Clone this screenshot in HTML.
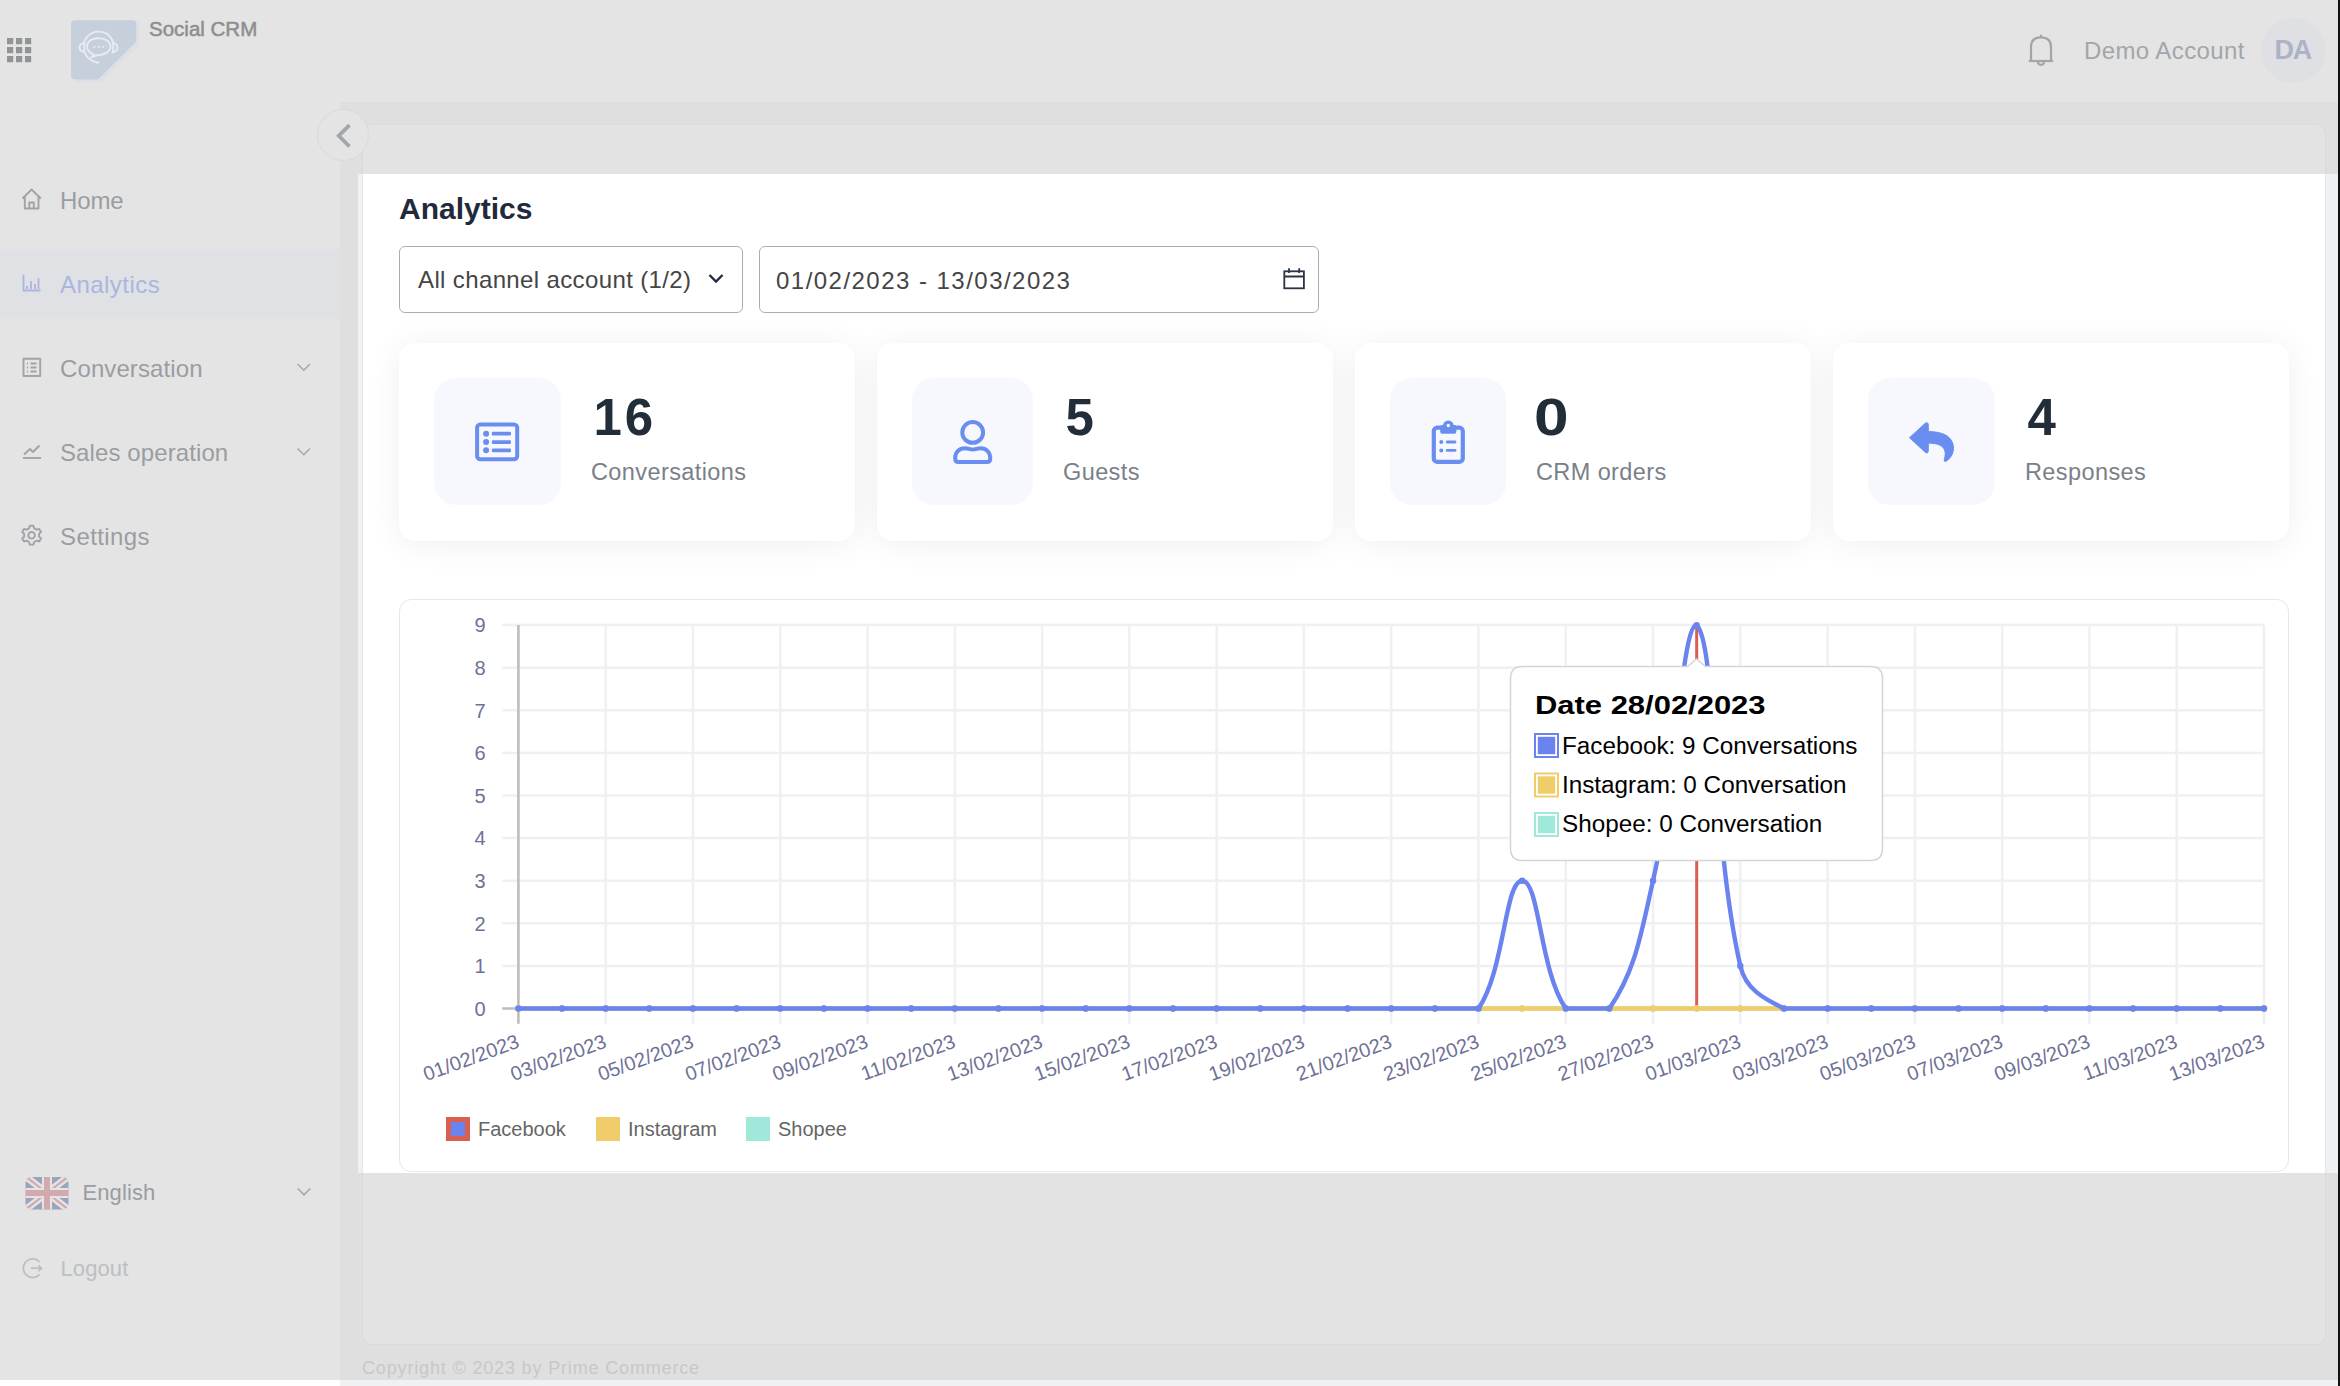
<!DOCTYPE html><html><head><meta charset="utf-8"><title>Analytics</title><style>
*{margin:0;padding:0;box-sizing:border-box}
html,body{width:2340px;height:1386px;overflow:hidden;background:#e4e4e4;font-family:"Liberation Sans",sans-serif}
.abs{position:absolute}
.t{position:absolute;white-space:nowrap;line-height:1}
</style></head><body>
<div class="abs" style="left:340px;top:102px;width:1998px;height:1278px;background:#dfdfdf"></div>
<div class="abs" style="left:0;top:1380px;width:340px;height:6px;background:#ffffff"></div>
<div class="abs" style="left:340px;top:1380px;width:1998px;height:6px;background:#f0f1f3"></div>
<div class="abs" style="left:362px;top:124px;width:1964px;height:1221px;background:#e3e3e3;border:1.5px solid #dadada;border-radius:10px"></div>
<div class="abs" style="left:2338px;top:0;width:2px;height:1386px;background:#111"></div>
<svg class="abs" style="left:0;top:0" width="60" height="80"><rect x="7" y="38" width="6.2" height="6.2" fill="#919496"/><rect x="16" y="38" width="6.2" height="6.2" fill="#919496"/><rect x="25" y="38" width="6.2" height="6.2" fill="#919496"/><rect x="7" y="47" width="6.2" height="6.2" fill="#919496"/><rect x="16" y="47" width="6.2" height="6.2" fill="#919496"/><rect x="25" y="47" width="6.2" height="6.2" fill="#919496"/><rect x="7" y="56" width="6.2" height="6.2" fill="#919496"/><rect x="16" y="56" width="6.2" height="6.2" fill="#919496"/><rect x="25" y="56" width="6.2" height="6.2" fill="#919496"/></svg>
<svg class="abs" style="left:60px;top:10px" width="100" height="90" viewBox="60 10 100 90">
<path d="M75 23.5 Q75 20.3 78 20.3 H136 Q139.2 20.3 139.2 23.5 V45 L101 82.4 H77 Q74 82.4 74 79 Z" fill="#dde0e6"/>
<path d="M75 20.3 H132.5 Q136.2 20.3 136.2 24 V41.8 L98 79.4 H75 Q71 79.4 71 75.5 V24.3 Q71 20.3 75 20.3 Z" fill="#c5d0dc"/>
<g fill="none" stroke="#e8ebef" stroke-width="1.9" stroke-linecap="round">
<path d="M84.3 41 Q89 31.6 98.6 31.6 Q108.5 31.6 112.5 40.5"/>
<path d="M84.5 43 Q83.5 47 84.5 52 Q87 60 97 62.5 H98.5"/>
<path d="M112.5 40 Q114 48 112.5 52.5"/>
<path d="M84 43 Q79.5 44 79.5 47.5 Q79.5 51 84 52"/>
<path d="M113 43 Q117.5 44 117.5 47.5 Q117.5 51.5 113 52"/>
<path d="M98.5 38.3 C106 38.3 110.5 42 110.5 46.5 C110.5 51.5 105 55 97 55.3 L91.8 57 L93.5 54.3 C89 52.5 87 49.5 87 46.5 C87 42 91 38.3 98.5 38.3 Z"/>
</g>
<g fill="#e8ebef"><rect x="93.5" y="46" width="1.8" height="1.8"/><rect x="97.8" y="46" width="1.8" height="1.8"/><rect x="102" y="46" width="1.8" height="1.8"/></g>
</svg>
<div class="t" style="left:149px;top:18.65px;font-size:20.5px;color:#8f8f8f;letter-spacing:0px;-webkit-text-stroke:0.55px #8f8f8f">Social CRM</div>
<svg class="abs" style="left:2020px;top:30px" width="44" height="44" viewBox="2020 30 44 44">
<g fill="none" stroke="#a2a6aa" stroke-width="2.2" stroke-linejoin="round">
<path d="M2031 60.8 V47 Q2031 37.3 2041 37.3 Q2051 37.3 2051 47 V60.8"/>
<path d="M2028.8 61 H2053.2"/>
<path d="M2038 61.5 Q2038 64.8 2041 64.8 Q2044 64.8 2044 61.5"/>
<path d="M2041 34.8 V37.3"/>
</g></svg>
<div class="t" style="left:2084px;top:38.88px;font-size:24px;color:#a2a6aa;letter-spacing:0.4px;">Demo Account</div>
<div class="abs" style="left:2261px;top:17.5px;width:65px;height:65px;border-radius:50%;background:#dfe0e3"></div>
<div class="t" style="left:2274.5px;top:37.14px;font-size:27px;color:#abb3c5;font-weight:bold;letter-spacing:-1.2px;">DA</div>
<div class="abs" style="left:317px;top:109px;width:52px;height:52px;border-radius:50%;background:#e4e4e4;border:1px solid #dadada"></div>
<svg class="abs" style="left:325px;top:117px" width="36" height="36" viewBox="325 117 36 36">
<path d="M349.5 125 L338.8 135.8 L349.5 146.5" fill="none" stroke="#a2a6a9" stroke-width="3.8"/></svg>
<div class="abs" style="left:0;top:248.5px;width:340px;height:70.5px;background:#e0e1e5"></div>
<div class="t" style="left:60px;top:188.98px;font-size:24px;color:#9a9da1;letter-spacing:-0.1px;">Home</div>
<div class="t" style="left:60px;top:272.98px;font-size:24px;color:#a9b7de;letter-spacing:0.45px;">Analytics</div>
<div class="t" style="left:60px;top:356.98px;font-size:24px;color:#9a9da1;letter-spacing:0.1px;">Conversation</div>
<div class="t" style="left:60px;top:440.98px;font-size:24px;color:#9a9da1;letter-spacing:0.1px;">Sales operation</div>
<div class="t" style="left:60px;top:524.98px;font-size:24px;color:#9a9da1;letter-spacing:0.4px;">Settings</div>
<svg class="abs" style="left:0;top:160px" width="340" height="420" viewBox="0 160 340 420">
<g fill="none" stroke="#a0a3a7" stroke-width="1.9" stroke-linejoin="round">
<path d="M22.5 198.5 L31.6 189.5 L40.8 198.5 M24.8 196.5 V208.5 H38.5 V196.5 M29.3 208.5 V202.5 H33.8 V208.5"/>
<path d="M23.5 358.8 H40.2 V376 H23.5 Z"/>
<path d="M27 363.5 H28 M27 367.5 H28 M27 371.5 H28 M30.5 363.5 H36.5 M30.5 367.5 H36.5 M30.5 371.5 H36.5"/>
<path d="M23 458 H41"/>
<path d="M24 454.5 L30 449 L33 452 L39.5 445.5"/>
<circle cx="31.6" cy="535.3" r="3.3"/>
<path d="M29.8 525.8 h3.6 l0.8 2.6 l2.4 1.3 l2.6-0.8 l1.8 3.1 l-2 1.9 v2.6 l2 1.9 l-1.8 3.1 l-2.6-0.8 l-2.4 1.3 l-0.8 2.6 h-3.6 l-0.8-2.6 l-2.4-1.3 l-2.6 0.8 l-1.8-3.1 l2-1.9 v-2.6 l-2-1.9 l1.8-3.1 l2.6 0.8 l2.4-1.3 z"/>
</g>
<g fill="none" stroke="#a9b7de" stroke-width="1.8">
<path d="M23.5 274.5 V290.5 H40.5"/>
<path d="M27 286 V289 M31 281 V289 M35 284 V289 M38.5 278 V289"/>
</g>
<g fill="none" stroke="#a6a9ad" stroke-width="1.6">
<path d="M297.5 364 L303.8 370.2 L310 364"/>
<path d="M297.5 448.5 L303.8 454.7 L310 448.5"/>
</g>
</svg>
<svg class="abs" style="left:20px;top:1170px" width="60" height="50" viewBox="20 1170 60 50">
<defs><clipPath id="fl"><rect x="25.5" y="1177" width="43" height="32.5" rx="6"/></clipPath></defs>
<g clip-path="url(#fl)">
<rect x="25" y="1176" width="44" height="34" fill="#9ba3bd"/>
<path d="M25 1176 L69 1210 M69 1176 L25 1210" stroke="#e4e4e4" stroke-width="7"/>
<path d="M25 1176 L47 1193 M69 1176 L47 1193 M25 1210 L47 1193 M69 1210 L47 1193" stroke="#d2a9ae" stroke-width="2.2"/>
<path d="M47 1176 V1210 M25 1193 H69" stroke="#e4e4e4" stroke-width="10"/>
<path d="M47 1176 V1210 M25 1193 H69" stroke="#d2a9ae" stroke-width="6"/>
</g></svg>
<div class="t" style="left:82.5px;top:1181.68px;font-size:22px;color:#9a9da1;letter-spacing:0.1px;">English</div>
<svg class="abs" style="left:290px;top:1180px" width="30" height="25" viewBox="290 1180 30 25">
<path d="M297.8 1188.5 L304 1194.8 L310.3 1188.5" fill="none" stroke="#a6a9ad" stroke-width="1.7"/></svg>
<svg class="abs" style="left:15px;top:1250px" width="35" height="35" viewBox="15 1250 35 35">
<g fill="none" stroke="#bcbfc3" stroke-width="1.8">
<path d="M39.5 1262 A9.3 9.3 0 1 0 39.5 1274.5"/>
<path d="M31 1268.2 H41.5 M38.5 1265.3 L41.5 1268.2 L38.5 1271.1"/>
</g></svg>
<div class="t" style="left:60.5px;top:1257.88px;font-size:22px;color:#bcbfc3;letter-spacing:0.1px;">Logout</div>
<div class="t" style="left:362px;top:1358.96px;font-size:18px;color:#c6c8cb;letter-spacing:0.84px;">Copyright &copy; 2023 by Prime Commerce</div>
<div class="abs" style="left:358px;top:174px;width:1980px;height:999px;background:#f0f1f3;overflow:hidden">
<div class="abs" style="left:4px;top:-50px;width:1964px;height:1221px;background:#fff;border:1.5px solid #e6e8eb;border-radius:10px"></div>
</div>
<div class="t" style="left:399px;top:194.30px;font-size:30px;color:#1f2a3a;font-weight:bold;letter-spacing:0px;">Analytics</div>
<div class="abs" style="left:399px;top:245.5px;width:344px;height:67.5px;border:1.6px solid #a9adb3;border-radius:6px;background:#fff"></div>
<div class="t" style="left:418px;top:268.18px;font-size:24px;color:#454545;letter-spacing:0.37px;">All channel account (1/2)</div>
<svg class="abs" style="left:700px;top:265px" width="30" height="25" viewBox="700 265 30 25">
<path d="M709.5 275 L716 281.6 L722.5 275" fill="none" stroke="#1f2a3a" stroke-width="2.3"/></svg>
<div class="abs" style="left:758.5px;top:245.5px;width:560px;height:67.5px;border:1.6px solid #a9adb3;border-radius:6px;background:#fff"></div>
<div class="t" style="left:776px;top:268.68px;font-size:24px;color:#454545;letter-spacing:1.47px;">01/02/2023 - 13/03/2023</div>
<svg class="abs" style="left:1278px;top:262px" width="32" height="32" viewBox="1278 262 32 32">
<g fill="none" stroke="#2a3444" stroke-width="1.8">
<rect x="1284.3" y="271.3" width="19.6" height="17"/>
<path d="M1284.3 276.5 H1303.9 M1289 268.3 V273 M1299.2 268.3 V273"/>
</g></svg>
<div class="abs" style="left:399px;top:343px;width:456px;height:198px;border-radius:16px;background:#fff;box-shadow:0 3px 34px rgba(0,0,0,0.065)"></div>
<div class="abs" style="left:434px;top:378px;width:127px;height:127px;border-radius:22px;background:#f6f8fe"></div>
<div class="t" style="left:593.5px;top:392.13px;font-size:51px;color:#222d3a;font-weight:bold;letter-spacing:3px;">16</div>
<div class="t" style="left:591px;top:461.31px;font-size:23.5px;color:#7a8088;letter-spacing:0.4px;">Conversations</div>
<div class="abs" style="left:877px;top:343px;width:456px;height:198px;border-radius:16px;background:#fff;box-shadow:0 3px 34px rgba(0,0,0,0.065)"></div>
<div class="abs" style="left:912px;top:378px;width:121px;height:127px;border-radius:22px;background:#f6f8fe"></div>
<div class="t" style="left:1065.5px;top:392.13px;font-size:51px;color:#222d3a;font-weight:bold;letter-spacing:3px;">5</div>
<div class="t" style="left:1063px;top:461.31px;font-size:23.5px;color:#7a8088;letter-spacing:0.4px;">Guests</div>
<div class="abs" style="left:1355px;top:343px;width:456px;height:198px;border-radius:16px;background:#fff;box-shadow:0 3px 34px rgba(0,0,0,0.065)"></div>
<div class="abs" style="left:1390px;top:378px;width:116px;height:127px;border-radius:22px;background:#f6f8fe"></div>
<div class="t" style="left:1534.0px;top:392.13px;font-size:51px;color:#222d3a;font-weight:bold;letter-spacing:3px;transform:scaleX(1.22);transform-origin:0 0">0</div>
<div class="t" style="left:1536px;top:461.31px;font-size:23.5px;color:#7a8088;letter-spacing:0.4px;">CRM orders</div>
<div class="abs" style="left:1833px;top:343px;width:456px;height:198px;border-radius:16px;background:#fff;box-shadow:0 3px 34px rgba(0,0,0,0.065)"></div>
<div class="abs" style="left:1868px;top:378px;width:127px;height:127px;border-radius:22px;background:#f6f8fe"></div>
<div class="t" style="left:2027.5px;top:392.13px;font-size:51px;color:#222d3a;font-weight:bold;letter-spacing:3px;">4</div>
<div class="t" style="left:2025px;top:461.31px;font-size:23.5px;color:#7a8088;letter-spacing:0.4px;">Responses</div>
<svg class="abs" style="left:0;top:0;overflow:visible" width="2340" height="600" viewBox="0 0 2340 600">
<rect x="477.1" y="424.4" width="40.1" height="34.8" rx="3.2" stroke="#6a8ef0" fill="none" stroke-width="4"/>
<g fill="#6a8ef0">
<circle cx="486.1" cy="433.7" r="3"/><circle cx="486.1" cy="442.1" r="3"/><circle cx="486.1" cy="450.3" r="3"/>
<rect x="491.8" y="431.8" width="19.2" height="3.8" rx="1.3"/><rect x="491.8" y="440.2" width="19.2" height="3.8" rx="1.3"/><rect x="491.8" y="448.4" width="19.2" height="3.8" rx="1.3"/>
</g>
<g stroke="#6a8ef0" fill="none" stroke-width="4">
<circle cx="972.7" cy="432.4" r="10.4"/>
<path d="M958.5 462 H987 Q990.2 462 990.2 458.8 V458 C990.2 452 986 448.2 980.5 448.2 C977.4 448.2 975.4 449.6 972.7 449.6 C970 449.6 968 448.2 965 448.2 C959.4 448.2 955.2 452 955.2 458 V458.8 Q955.2 462 958.5 462 Z"/>
</g>
<rect x="1433.8" y="427.6" width="29" height="34.3" rx="3.5" stroke="#6a8ef0" fill="none" stroke-width="4.2"/>
<g fill="#6a8ef0">
<rect x="1440.2" y="425" width="16.2" height="8.7" rx="2"/>
<circle cx="1448.3" cy="425.8" r="5.4"/>
<circle cx="1441.3" cy="442" r="2"/><circle cx="1441.3" cy="450.4" r="2"/>
<rect x="1445.8" y="440.6" width="10.6" height="2.8" rx="1.4"/><rect x="1445.8" y="449" width="10.6" height="2.8" rx="1.4"/>
</g>
<circle cx="1448.3" cy="425.5" r="1.7" fill="#f6f8fe"/>
<path d="M1909.5 437.7 L1925 423.5 Q1928 421.2 1928.3 425 V431.6 C1942 431.6 1953.5 436 1953.5 448.5 C1953.5 454 1950 458.5 1946.5 461 Q1943.5 462.2 1944.3 459.5 C1946.5 452 1946 443.3 1928.3 443.1 V450.5 Q1928 454.5 1925 452 Z" fill="#6a8ef0" stroke="#6a8ef0" stroke-width="1" stroke-linejoin="round"/>
</svg>
<div class="abs" style="left:399px;top:599px;width:1890px;height:573px;border:1.5px solid #e5e7ea;border-radius:12px;background:#fff"></div>
<svg class="abs" style="left:0;top:0" width="2340" height="1386" viewBox="0 0 2340 1386">
<style>.yl{font:20px "Liberation Sans",sans-serif;fill:#6e7196}.xl{font:20px "Liberation Sans",sans-serif;fill:#6e7196}</style>
<line x1="605.68" y1="625.10" x2="605.68" y2="1023.8" stroke="#eef0f3" stroke-width="2.5"/>
<line x1="692.96" y1="625.10" x2="692.96" y2="1023.8" stroke="#eef0f3" stroke-width="2.5"/>
<line x1="780.24" y1="625.10" x2="780.24" y2="1023.8" stroke="#eef0f3" stroke-width="2.5"/>
<line x1="867.52" y1="625.10" x2="867.52" y2="1023.8" stroke="#eef0f3" stroke-width="2.5"/>
<line x1="954.80" y1="625.10" x2="954.80" y2="1023.8" stroke="#eef0f3" stroke-width="2.5"/>
<line x1="1042.08" y1="625.10" x2="1042.08" y2="1023.8" stroke="#eef0f3" stroke-width="2.5"/>
<line x1="1129.36" y1="625.10" x2="1129.36" y2="1023.8" stroke="#eef0f3" stroke-width="2.5"/>
<line x1="1216.64" y1="625.10" x2="1216.64" y2="1023.8" stroke="#eef0f3" stroke-width="2.5"/>
<line x1="1303.92" y1="625.10" x2="1303.92" y2="1023.8" stroke="#eef0f3" stroke-width="2.5"/>
<line x1="1391.20" y1="625.10" x2="1391.20" y2="1023.8" stroke="#eef0f3" stroke-width="2.5"/>
<line x1="1478.48" y1="625.10" x2="1478.48" y2="1023.8" stroke="#eef0f3" stroke-width="2.5"/>
<line x1="1565.76" y1="625.10" x2="1565.76" y2="1023.8" stroke="#eef0f3" stroke-width="2.5"/>
<line x1="1653.04" y1="625.10" x2="1653.04" y2="1023.8" stroke="#eef0f3" stroke-width="2.5"/>
<line x1="1740.32" y1="625.10" x2="1740.32" y2="1023.8" stroke="#eef0f3" stroke-width="2.5"/>
<line x1="1827.60" y1="625.10" x2="1827.60" y2="1023.8" stroke="#eef0f3" stroke-width="2.5"/>
<line x1="1914.88" y1="625.10" x2="1914.88" y2="1023.8" stroke="#eef0f3" stroke-width="2.5"/>
<line x1="2002.16" y1="625.10" x2="2002.16" y2="1023.8" stroke="#eef0f3" stroke-width="2.5"/>
<line x1="2089.44" y1="625.10" x2="2089.44" y2="1023.8" stroke="#eef0f3" stroke-width="2.5"/>
<line x1="2176.72" y1="625.10" x2="2176.72" y2="1023.8" stroke="#eef0f3" stroke-width="2.5"/>
<line x1="2264.00" y1="625.10" x2="2264.00" y2="1023.8" stroke="#eef0f3" stroke-width="2.5"/>
<line x1="502.2" y1="965.90" x2="2264.00" y2="965.90" stroke="#eef0f3" stroke-width="2.5"/>
<line x1="502.2" y1="923.30" x2="2264.00" y2="923.30" stroke="#eef0f3" stroke-width="2.5"/>
<line x1="502.2" y1="880.70" x2="2264.00" y2="880.70" stroke="#eef0f3" stroke-width="2.5"/>
<line x1="502.2" y1="838.10" x2="2264.00" y2="838.10" stroke="#eef0f3" stroke-width="2.5"/>
<line x1="502.2" y1="795.50" x2="2264.00" y2="795.50" stroke="#eef0f3" stroke-width="2.5"/>
<line x1="502.2" y1="752.90" x2="2264.00" y2="752.90" stroke="#eef0f3" stroke-width="2.5"/>
<line x1="502.2" y1="710.30" x2="2264.00" y2="710.30" stroke="#eef0f3" stroke-width="2.5"/>
<line x1="502.2" y1="667.70" x2="2264.00" y2="667.70" stroke="#eef0f3" stroke-width="2.5"/>
<line x1="502.2" y1="625.10" x2="2264.00" y2="625.10" stroke="#eef0f3" stroke-width="2.5"/>
<line x1="502.2" y1="1008.50" x2="2264.00" y2="1008.50" stroke="#bdbdbd" stroke-width="2.6"/>
<line x1="518.40" y1="625.10" x2="518.40" y2="1023.8" stroke="#bdbdbd" stroke-width="2.6"/>
<text x="485.5" y="1015.70" text-anchor="end" class="yl">0</text>
<text x="485.5" y="973.10" text-anchor="end" class="yl">1</text>
<text x="485.5" y="930.50" text-anchor="end" class="yl">2</text>
<text x="485.5" y="887.90" text-anchor="end" class="yl">3</text>
<text x="485.5" y="845.30" text-anchor="end" class="yl">4</text>
<text x="485.5" y="802.70" text-anchor="end" class="yl">5</text>
<text x="485.5" y="760.10" text-anchor="end" class="yl">6</text>
<text x="485.5" y="717.50" text-anchor="end" class="yl">7</text>
<text x="485.5" y="674.90" text-anchor="end" class="yl">8</text>
<text x="485.5" y="632.30" text-anchor="end" class="yl">9</text>
<text transform="translate(520.40 1047) rotate(-20)" text-anchor="end" class="xl">01/02/2023</text>
<text transform="translate(607.68 1047) rotate(-20)" text-anchor="end" class="xl">03/02/2023</text>
<text transform="translate(694.96 1047) rotate(-20)" text-anchor="end" class="xl">05/02/2023</text>
<text transform="translate(782.24 1047) rotate(-20)" text-anchor="end" class="xl">07/02/2023</text>
<text transform="translate(869.52 1047) rotate(-20)" text-anchor="end" class="xl">09/02/2023</text>
<text transform="translate(956.80 1047) rotate(-20)" text-anchor="end" class="xl">11/02/2023</text>
<text transform="translate(1044.08 1047) rotate(-20)" text-anchor="end" class="xl">13/02/2023</text>
<text transform="translate(1131.36 1047) rotate(-20)" text-anchor="end" class="xl">15/02/2023</text>
<text transform="translate(1218.64 1047) rotate(-20)" text-anchor="end" class="xl">17/02/2023</text>
<text transform="translate(1305.92 1047) rotate(-20)" text-anchor="end" class="xl">19/02/2023</text>
<text transform="translate(1393.20 1047) rotate(-20)" text-anchor="end" class="xl">21/02/2023</text>
<text transform="translate(1480.48 1047) rotate(-20)" text-anchor="end" class="xl">23/02/2023</text>
<text transform="translate(1567.76 1047) rotate(-20)" text-anchor="end" class="xl">25/02/2023</text>
<text transform="translate(1655.04 1047) rotate(-20)" text-anchor="end" class="xl">27/02/2023</text>
<text transform="translate(1742.32 1047) rotate(-20)" text-anchor="end" class="xl">01/03/2023</text>
<text transform="translate(1829.60 1047) rotate(-20)" text-anchor="end" class="xl">03/03/2023</text>
<text transform="translate(1916.88 1047) rotate(-20)" text-anchor="end" class="xl">05/03/2023</text>
<text transform="translate(2004.16 1047) rotate(-20)" text-anchor="end" class="xl">07/03/2023</text>
<text transform="translate(2091.44 1047) rotate(-20)" text-anchor="end" class="xl">09/03/2023</text>
<text transform="translate(2178.72 1047) rotate(-20)" text-anchor="end" class="xl">11/03/2023</text>
<text transform="translate(2266.00 1047) rotate(-20)" text-anchor="end" class="xl">13/03/2023</text>
<line x1="1696.68" y1="625.10" x2="1696.68" y2="1008.50" stroke="#d95f50" stroke-width="3"/>
<path d="M518.40 1008.50C535.86 1008.50 544.58 1008.50 562.04 1008.50C579.50 1008.50 588.22 1008.50 605.68 1008.50C623.14 1008.50 631.86 1008.50 649.32 1008.50C666.78 1008.50 675.50 1008.50 692.96 1008.50C710.42 1008.50 719.14 1008.50 736.60 1008.50C754.06 1008.50 762.78 1008.50 780.24 1008.50C797.70 1008.50 806.42 1008.50 823.88 1008.50C841.34 1008.50 850.06 1008.50 867.52 1008.50C884.98 1008.50 893.70 1008.50 911.16 1008.50C928.62 1008.50 937.34 1008.50 954.80 1008.50C972.26 1008.50 980.98 1008.50 998.44 1008.50C1015.90 1008.50 1024.62 1008.50 1042.08 1008.50C1059.54 1008.50 1068.26 1008.50 1085.72 1008.50C1103.18 1008.50 1111.90 1008.50 1129.36 1008.50C1146.82 1008.50 1155.54 1008.50 1173.00 1008.50C1190.46 1008.50 1199.18 1008.50 1216.64 1008.50C1234.10 1008.50 1242.82 1008.50 1260.28 1008.50C1277.74 1008.50 1286.46 1008.50 1303.92 1008.50C1321.38 1008.50 1330.10 1008.50 1347.56 1008.50C1365.02 1008.50 1373.74 1008.50 1391.20 1008.50C1408.66 1008.50 1417.38 1008.50 1434.84 1008.50C1452.30 1008.50 1461.02 1008.50 1478.48 1008.50C1495.94 1008.50 1504.66 1008.50 1522.12 1008.50C1539.58 1008.50 1548.30 1008.50 1565.76 1008.50C1583.22 1008.50 1591.94 1008.50 1609.40 1008.50C1626.86 1008.50 1635.58 1008.50 1653.04 1008.50C1670.50 1008.50 1679.22 1008.50 1696.68 1008.50C1714.14 1008.50 1722.86 1008.50 1740.32 1008.50C1757.78 1008.50 1766.50 1008.50 1783.96 1008.50C1801.42 1008.50 1810.14 1008.50 1827.60 1008.50C1845.06 1008.50 1853.78 1008.50 1871.24 1008.50C1888.70 1008.50 1897.42 1008.50 1914.88 1008.50C1932.34 1008.50 1941.06 1008.50 1958.52 1008.50C1975.98 1008.50 1984.70 1008.50 2002.16 1008.50C2019.62 1008.50 2028.34 1008.50 2045.80 1008.50C2063.26 1008.50 2071.98 1008.50 2089.44 1008.50C2106.90 1008.50 2115.62 1008.50 2133.08 1008.50C2150.54 1008.50 2159.26 1008.50 2176.72 1008.50C2194.18 1008.50 2202.90 1008.50 2220.36 1008.50C2237.82 1008.50 2246.54 1008.50 2264.00 1008.50" fill="none" stroke="#a0e9da" stroke-width="4.4" stroke-linejoin="round"/>
<circle cx="518.40" cy="1008.50" r="3.2" fill="#a0e9da"/>
<circle cx="562.04" cy="1008.50" r="3.2" fill="#a0e9da"/>
<circle cx="605.68" cy="1008.50" r="3.2" fill="#a0e9da"/>
<circle cx="649.32" cy="1008.50" r="3.2" fill="#a0e9da"/>
<circle cx="692.96" cy="1008.50" r="3.2" fill="#a0e9da"/>
<circle cx="736.60" cy="1008.50" r="3.2" fill="#a0e9da"/>
<circle cx="780.24" cy="1008.50" r="3.2" fill="#a0e9da"/>
<circle cx="823.88" cy="1008.50" r="3.2" fill="#a0e9da"/>
<circle cx="867.52" cy="1008.50" r="3.2" fill="#a0e9da"/>
<circle cx="911.16" cy="1008.50" r="3.2" fill="#a0e9da"/>
<circle cx="954.80" cy="1008.50" r="3.2" fill="#a0e9da"/>
<circle cx="998.44" cy="1008.50" r="3.2" fill="#a0e9da"/>
<circle cx="1042.08" cy="1008.50" r="3.2" fill="#a0e9da"/>
<circle cx="1085.72" cy="1008.50" r="3.2" fill="#a0e9da"/>
<circle cx="1129.36" cy="1008.50" r="3.2" fill="#a0e9da"/>
<circle cx="1173.00" cy="1008.50" r="3.2" fill="#a0e9da"/>
<circle cx="1216.64" cy="1008.50" r="3.2" fill="#a0e9da"/>
<circle cx="1260.28" cy="1008.50" r="3.2" fill="#a0e9da"/>
<circle cx="1303.92" cy="1008.50" r="3.2" fill="#a0e9da"/>
<circle cx="1347.56" cy="1008.50" r="3.2" fill="#a0e9da"/>
<circle cx="1391.20" cy="1008.50" r="3.2" fill="#a0e9da"/>
<circle cx="1434.84" cy="1008.50" r="3.2" fill="#a0e9da"/>
<circle cx="1478.48" cy="1008.50" r="3.2" fill="#a0e9da"/>
<circle cx="1522.12" cy="1008.50" r="3.2" fill="#a0e9da"/>
<circle cx="1565.76" cy="1008.50" r="3.2" fill="#a0e9da"/>
<circle cx="1609.40" cy="1008.50" r="3.2" fill="#a0e9da"/>
<circle cx="1653.04" cy="1008.50" r="3.2" fill="#a0e9da"/>
<circle cx="1696.68" cy="1008.50" r="3.2" fill="#a0e9da"/>
<circle cx="1740.32" cy="1008.50" r="3.2" fill="#a0e9da"/>
<circle cx="1783.96" cy="1008.50" r="3.2" fill="#a0e9da"/>
<circle cx="1827.60" cy="1008.50" r="3.2" fill="#a0e9da"/>
<circle cx="1871.24" cy="1008.50" r="3.2" fill="#a0e9da"/>
<circle cx="1914.88" cy="1008.50" r="3.2" fill="#a0e9da"/>
<circle cx="1958.52" cy="1008.50" r="3.2" fill="#a0e9da"/>
<circle cx="2002.16" cy="1008.50" r="3.2" fill="#a0e9da"/>
<circle cx="2045.80" cy="1008.50" r="3.2" fill="#a0e9da"/>
<circle cx="2089.44" cy="1008.50" r="3.2" fill="#a0e9da"/>
<circle cx="2133.08" cy="1008.50" r="3.2" fill="#a0e9da"/>
<circle cx="2176.72" cy="1008.50" r="3.2" fill="#a0e9da"/>
<circle cx="2220.36" cy="1008.50" r="3.2" fill="#a0e9da"/>
<circle cx="2264.00" cy="1008.50" r="3.2" fill="#a0e9da"/>
<path d="M518.40 1008.50C535.86 1008.50 544.58 1008.50 562.04 1008.50C579.50 1008.50 588.22 1008.50 605.68 1008.50C623.14 1008.50 631.86 1008.50 649.32 1008.50C666.78 1008.50 675.50 1008.50 692.96 1008.50C710.42 1008.50 719.14 1008.50 736.60 1008.50C754.06 1008.50 762.78 1008.50 780.24 1008.50C797.70 1008.50 806.42 1008.50 823.88 1008.50C841.34 1008.50 850.06 1008.50 867.52 1008.50C884.98 1008.50 893.70 1008.50 911.16 1008.50C928.62 1008.50 937.34 1008.50 954.80 1008.50C972.26 1008.50 980.98 1008.50 998.44 1008.50C1015.90 1008.50 1024.62 1008.50 1042.08 1008.50C1059.54 1008.50 1068.26 1008.50 1085.72 1008.50C1103.18 1008.50 1111.90 1008.50 1129.36 1008.50C1146.82 1008.50 1155.54 1008.50 1173.00 1008.50C1190.46 1008.50 1199.18 1008.50 1216.64 1008.50C1234.10 1008.50 1242.82 1008.50 1260.28 1008.50C1277.74 1008.50 1286.46 1008.50 1303.92 1008.50C1321.38 1008.50 1330.10 1008.50 1347.56 1008.50C1365.02 1008.50 1373.74 1008.50 1391.20 1008.50C1408.66 1008.50 1417.38 1008.50 1434.84 1008.50C1452.30 1008.50 1461.02 1008.50 1478.48 1008.50C1495.94 1008.50 1504.66 1008.50 1522.12 1008.50C1539.58 1008.50 1548.30 1008.50 1565.76 1008.50C1583.22 1008.50 1591.94 1008.50 1609.40 1008.50C1626.86 1008.50 1635.58 1008.50 1653.04 1008.50C1670.50 1008.50 1679.22 1008.50 1696.68 1008.50C1714.14 1008.50 1722.86 1008.50 1740.32 1008.50C1757.78 1008.50 1766.50 1008.50 1783.96 1008.50C1801.42 1008.50 1810.14 1008.50 1827.60 1008.50C1845.06 1008.50 1853.78 1008.50 1871.24 1008.50C1888.70 1008.50 1897.42 1008.50 1914.88 1008.50C1932.34 1008.50 1941.06 1008.50 1958.52 1008.50C1975.98 1008.50 1984.70 1008.50 2002.16 1008.50C2019.62 1008.50 2028.34 1008.50 2045.80 1008.50C2063.26 1008.50 2071.98 1008.50 2089.44 1008.50C2106.90 1008.50 2115.62 1008.50 2133.08 1008.50C2150.54 1008.50 2159.26 1008.50 2176.72 1008.50C2194.18 1008.50 2202.90 1008.50 2220.36 1008.50C2237.82 1008.50 2246.54 1008.50 2264.00 1008.50" fill="none" stroke="#f0cd6a" stroke-width="4.4" stroke-linejoin="round"/>
<circle cx="518.40" cy="1008.50" r="3.2" fill="#f0cd6a"/>
<circle cx="562.04" cy="1008.50" r="3.2" fill="#f0cd6a"/>
<circle cx="605.68" cy="1008.50" r="3.2" fill="#f0cd6a"/>
<circle cx="649.32" cy="1008.50" r="3.2" fill="#f0cd6a"/>
<circle cx="692.96" cy="1008.50" r="3.2" fill="#f0cd6a"/>
<circle cx="736.60" cy="1008.50" r="3.2" fill="#f0cd6a"/>
<circle cx="780.24" cy="1008.50" r="3.2" fill="#f0cd6a"/>
<circle cx="823.88" cy="1008.50" r="3.2" fill="#f0cd6a"/>
<circle cx="867.52" cy="1008.50" r="3.2" fill="#f0cd6a"/>
<circle cx="911.16" cy="1008.50" r="3.2" fill="#f0cd6a"/>
<circle cx="954.80" cy="1008.50" r="3.2" fill="#f0cd6a"/>
<circle cx="998.44" cy="1008.50" r="3.2" fill="#f0cd6a"/>
<circle cx="1042.08" cy="1008.50" r="3.2" fill="#f0cd6a"/>
<circle cx="1085.72" cy="1008.50" r="3.2" fill="#f0cd6a"/>
<circle cx="1129.36" cy="1008.50" r="3.2" fill="#f0cd6a"/>
<circle cx="1173.00" cy="1008.50" r="3.2" fill="#f0cd6a"/>
<circle cx="1216.64" cy="1008.50" r="3.2" fill="#f0cd6a"/>
<circle cx="1260.28" cy="1008.50" r="3.2" fill="#f0cd6a"/>
<circle cx="1303.92" cy="1008.50" r="3.2" fill="#f0cd6a"/>
<circle cx="1347.56" cy="1008.50" r="3.2" fill="#f0cd6a"/>
<circle cx="1391.20" cy="1008.50" r="3.2" fill="#f0cd6a"/>
<circle cx="1434.84" cy="1008.50" r="3.2" fill="#f0cd6a"/>
<circle cx="1478.48" cy="1008.50" r="3.2" fill="#f0cd6a"/>
<circle cx="1522.12" cy="1008.50" r="3.2" fill="#f0cd6a"/>
<circle cx="1565.76" cy="1008.50" r="3.2" fill="#f0cd6a"/>
<circle cx="1609.40" cy="1008.50" r="3.2" fill="#f0cd6a"/>
<circle cx="1653.04" cy="1008.50" r="3.2" fill="#f0cd6a"/>
<circle cx="1696.68" cy="1008.50" r="3.2" fill="#f0cd6a"/>
<circle cx="1740.32" cy="1008.50" r="3.2" fill="#f0cd6a"/>
<circle cx="1783.96" cy="1008.50" r="3.2" fill="#f0cd6a"/>
<circle cx="1827.60" cy="1008.50" r="3.2" fill="#f0cd6a"/>
<circle cx="1871.24" cy="1008.50" r="3.2" fill="#f0cd6a"/>
<circle cx="1914.88" cy="1008.50" r="3.2" fill="#f0cd6a"/>
<circle cx="1958.52" cy="1008.50" r="3.2" fill="#f0cd6a"/>
<circle cx="2002.16" cy="1008.50" r="3.2" fill="#f0cd6a"/>
<circle cx="2045.80" cy="1008.50" r="3.2" fill="#f0cd6a"/>
<circle cx="2089.44" cy="1008.50" r="3.2" fill="#f0cd6a"/>
<circle cx="2133.08" cy="1008.50" r="3.2" fill="#f0cd6a"/>
<circle cx="2176.72" cy="1008.50" r="3.2" fill="#f0cd6a"/>
<circle cx="2220.36" cy="1008.50" r="3.2" fill="#f0cd6a"/>
<circle cx="2264.00" cy="1008.50" r="3.2" fill="#f0cd6a"/>
<path d="M518.40 1008.50C535.86 1008.50 544.58 1008.50 562.04 1008.50C579.50 1008.50 588.22 1008.50 605.68 1008.50C623.14 1008.50 631.86 1008.50 649.32 1008.50C666.78 1008.50 675.50 1008.50 692.96 1008.50C710.42 1008.50 719.14 1008.50 736.60 1008.50C754.06 1008.50 762.78 1008.50 780.24 1008.50C797.70 1008.50 806.42 1008.50 823.88 1008.50C841.34 1008.50 850.06 1008.50 867.52 1008.50C884.98 1008.50 893.70 1008.50 911.16 1008.50C928.62 1008.50 937.34 1008.50 954.80 1008.50C972.26 1008.50 980.98 1008.50 998.44 1008.50C1015.90 1008.50 1024.62 1008.50 1042.08 1008.50C1059.54 1008.50 1068.26 1008.50 1085.72 1008.50C1103.18 1008.50 1111.90 1008.50 1129.36 1008.50C1146.82 1008.50 1155.54 1008.50 1173.00 1008.50C1190.46 1008.50 1199.18 1008.50 1216.64 1008.50C1234.10 1008.50 1242.82 1008.50 1260.28 1008.50C1277.74 1008.50 1286.46 1008.50 1303.92 1008.50C1321.38 1008.50 1330.10 1008.50 1347.56 1008.50C1365.02 1008.50 1373.74 1008.50 1391.20 1008.50C1408.66 1008.50 1417.38 1008.50 1434.84 1008.50C1452.30 1008.50 1469.95 1008.50 1478.48 1008.50C1504.87 969.86 1504.66 880.70 1522.12 880.70C1539.58 880.70 1539.37 969.86 1565.76 1008.50C1574.29 1008.50 1600.87 1008.50 1609.40 1008.50C1635.79 969.86 1641.08 933.22 1653.04 880.70C1676.00 779.86 1681.66 625.10 1696.68 625.10C1716.58 644.52 1710.67 835.66 1740.32 965.90C1745.58 989.02 1763.61 998.57 1783.96 1008.50C1798.52 1008.50 1810.14 1008.50 1827.60 1008.50C1845.06 1008.50 1853.78 1008.50 1871.24 1008.50C1888.70 1008.50 1897.42 1008.50 1914.88 1008.50C1932.34 1008.50 1941.06 1008.50 1958.52 1008.50C1975.98 1008.50 1984.70 1008.50 2002.16 1008.50C2019.62 1008.50 2028.34 1008.50 2045.80 1008.50C2063.26 1008.50 2071.98 1008.50 2089.44 1008.50C2106.90 1008.50 2115.62 1008.50 2133.08 1008.50C2150.54 1008.50 2159.26 1008.50 2176.72 1008.50C2194.18 1008.50 2202.90 1008.50 2220.36 1008.50C2237.82 1008.50 2246.54 1008.50 2264.00 1008.50" fill="none" stroke="#6b83ef" stroke-width="4.4" stroke-linejoin="round"/>
<circle cx="518.40" cy="1008.50" r="3.2" fill="#6b83ef"/>
<circle cx="562.04" cy="1008.50" r="3.2" fill="#6b83ef"/>
<circle cx="605.68" cy="1008.50" r="3.2" fill="#6b83ef"/>
<circle cx="649.32" cy="1008.50" r="3.2" fill="#6b83ef"/>
<circle cx="692.96" cy="1008.50" r="3.2" fill="#6b83ef"/>
<circle cx="736.60" cy="1008.50" r="3.2" fill="#6b83ef"/>
<circle cx="780.24" cy="1008.50" r="3.2" fill="#6b83ef"/>
<circle cx="823.88" cy="1008.50" r="3.2" fill="#6b83ef"/>
<circle cx="867.52" cy="1008.50" r="3.2" fill="#6b83ef"/>
<circle cx="911.16" cy="1008.50" r="3.2" fill="#6b83ef"/>
<circle cx="954.80" cy="1008.50" r="3.2" fill="#6b83ef"/>
<circle cx="998.44" cy="1008.50" r="3.2" fill="#6b83ef"/>
<circle cx="1042.08" cy="1008.50" r="3.2" fill="#6b83ef"/>
<circle cx="1085.72" cy="1008.50" r="3.2" fill="#6b83ef"/>
<circle cx="1129.36" cy="1008.50" r="3.2" fill="#6b83ef"/>
<circle cx="1173.00" cy="1008.50" r="3.2" fill="#6b83ef"/>
<circle cx="1216.64" cy="1008.50" r="3.2" fill="#6b83ef"/>
<circle cx="1260.28" cy="1008.50" r="3.2" fill="#6b83ef"/>
<circle cx="1303.92" cy="1008.50" r="3.2" fill="#6b83ef"/>
<circle cx="1347.56" cy="1008.50" r="3.2" fill="#6b83ef"/>
<circle cx="1391.20" cy="1008.50" r="3.2" fill="#6b83ef"/>
<circle cx="1434.84" cy="1008.50" r="3.2" fill="#6b83ef"/>
<circle cx="1478.48" cy="1008.50" r="3.2" fill="#6b83ef"/>
<circle cx="1522.12" cy="880.70" r="3.2" fill="#6b83ef"/>
<circle cx="1565.76" cy="1008.50" r="3.2" fill="#6b83ef"/>
<circle cx="1609.40" cy="1008.50" r="3.2" fill="#6b83ef"/>
<circle cx="1653.04" cy="880.70" r="3.2" fill="#6b83ef"/>
<circle cx="1696.68" cy="625.10" r="3.2" fill="#6b83ef"/>
<circle cx="1740.32" cy="965.90" r="3.2" fill="#6b83ef"/>
<circle cx="1783.96" cy="1008.50" r="3.2" fill="#6b83ef"/>
<circle cx="1827.60" cy="1008.50" r="3.2" fill="#6b83ef"/>
<circle cx="1871.24" cy="1008.50" r="3.2" fill="#6b83ef"/>
<circle cx="1914.88" cy="1008.50" r="3.2" fill="#6b83ef"/>
<circle cx="1958.52" cy="1008.50" r="3.2" fill="#6b83ef"/>
<circle cx="2002.16" cy="1008.50" r="3.2" fill="#6b83ef"/>
<circle cx="2045.80" cy="1008.50" r="3.2" fill="#6b83ef"/>
<circle cx="2089.44" cy="1008.50" r="3.2" fill="#6b83ef"/>
<circle cx="2133.08" cy="1008.50" r="3.2" fill="#6b83ef"/>
<circle cx="2176.72" cy="1008.50" r="3.2" fill="#6b83ef"/>
<circle cx="2220.36" cy="1008.50" r="3.2" fill="#6b83ef"/>
<circle cx="2264.00" cy="1008.50" r="3.2" fill="#6b83ef"/>
</svg>
<div class="abs" style="left:445.5px;top:1116.5px;width:24.5px;height:24.5px;background:#6b83ef;border:5px solid #d95f50"></div>
<div class="t" style="left:478px;top:1118.87px;font-size:20px;color:#666666;letter-spacing:0px;">Facebook</div>
<div class="abs" style="left:595.5px;top:1116.5px;width:24.5px;height:24.5px;background:#f0cd6a"></div>
<div class="t" style="left:628px;top:1118.87px;font-size:20px;color:#666666;letter-spacing:0px;">Instagram</div>
<div class="abs" style="left:745.5px;top:1116.5px;width:24.5px;height:24.5px;background:#a0e9da"></div>
<div class="t" style="left:778px;top:1118.87px;font-size:20px;color:#666666;letter-spacing:0px;">Shopee</div>
<svg class="abs" style="left:1500px;top:650px" width="400" height="220" viewBox="1500 650 400 220">
<path d="M1522.5 666.5 H1687.5 L1696.5 659 L1705.5 666.5 H1870.5 Q1882.5 666.5 1882.5 678.5 V848.5 Q1882.5 860.5 1870.5 860.5 H1522.5 Q1510.5 860.5 1510.5 848.5 V678.5 Q1510.5 666.5 1522.5 666.5 Z" fill="#fff" stroke="#d5d5d5" stroke-width="1.5"/>
<rect x="1535" y="734" width="23" height="23" fill="#fff" stroke="#6b83ef" stroke-width="2"/><rect x="1537.8" y="736.8" width="17.4" height="17.4" fill="#6b83ef"/>
<rect x="1535" y="773.5" width="23" height="23" fill="#fff" stroke="#f0cd6a" stroke-width="2"/><rect x="1537.8" y="776.3" width="17.4" height="17.4" fill="#f0cd6a"/>
<rect x="1535" y="813" width="23" height="23" fill="#fff" stroke="#a0e9da" stroke-width="2"/><rect x="1537.8" y="815.8" width="17.4" height="17.4" fill="#a0e9da"/>
</svg>
<div class="t" style="left:1535px;top:692.09px;font-size:26px;color:#000;font-weight:bold;letter-spacing:0px;transform:scaleX(1.19);transform-origin:0 0">Date 28/02/2023</div>
<div class="t" style="left:1562px;top:734.53px;font-size:23px;color:#000;letter-spacing:0px;transform:scaleX(1.055);transform-origin:0 0">Facebook: 9 Conversations</div>
<div class="t" style="left:1562px;top:773.93px;font-size:23px;color:#000;letter-spacing:0px;transform:scaleX(1.055);transform-origin:0 0">Instagram: 0 Conversation</div>
<div class="t" style="left:1562px;top:813.33px;font-size:23px;color:#000;letter-spacing:0px;transform:scaleX(1.055);transform-origin:0 0">Shopee: 0 Conversation</div>
</body></html>
